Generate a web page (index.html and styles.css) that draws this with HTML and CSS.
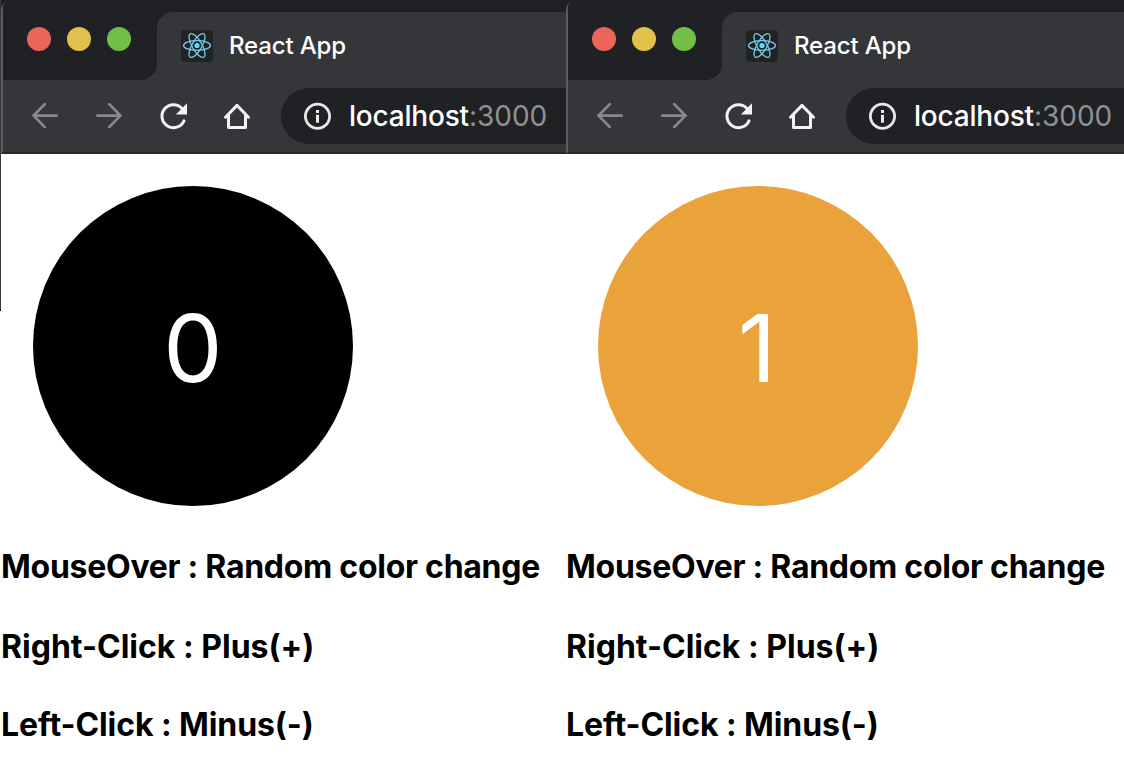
FILE: index.html
```html
<!DOCTYPE html>
<html lang="en">
<head>
<meta charset="utf-8">
<title>React App</title>
<link rel="stylesheet" href="styles.css">
</head>
<body>
<svg class="symbols" width="0" height="0" aria-hidden="true">
  <symbol id="react" viewBox="0 0 32 32">
    <rect width="32" height="32" rx="4" fill="#222"/>
    <g fill="none" stroke="#6fd0ee" stroke-width="1.3">
      <ellipse cx="16" cy="15.5" rx="13.5" ry="4.9"/>
      <ellipse cx="16" cy="15.5" rx="13.5" ry="4.9" transform="rotate(60 16 15.5)"/>
      <ellipse cx="16" cy="15.5" rx="13.5" ry="4.9" transform="rotate(120 16 15.5)"/>
    </g>
    <circle cx="16" cy="15.5" r="2.6" fill="#61dafb"/>
  </symbol>
  <symbol id="back" viewBox="0 0 32 32">
    <path d="M27.7 15.6H5.3M15.8 4.1L4.6 15.6L15.8 27.1" fill="none" stroke="#89898b" stroke-width="2.7" stroke-linecap="round"/>
  </symbol>
  <symbol id="forward" viewBox="0 0 32 32">
    <path d="M4.3 15.6H26.7M16.2 4.1L27.4 15.6L16.2 27.1" fill="none" stroke="#89898b" stroke-width="2.7" stroke-linecap="round"/>
  </symbol>
  <symbol id="reload" viewBox="0 0 32 32">
    <path d="M27 20.8A11.5 11.5 0 1 1 25 8.4" fill="none" stroke="#f1f3f4" stroke-width="3" stroke-linecap="round"/>
    <path d="M30 3.3V14.5H18.8Z" fill="#f1f3f4"/>
  </symbol>
  <symbol id="home" viewBox="0 0 32 32">
    <path d="M4.5 17.2L16 5.4L27.5 17.2M7.5 15V27.4H24.5V15" fill="none" stroke="#f1f3f4" stroke-width="3" stroke-linecap="round" stroke-linejoin="round"/>
  </symbol>
  <symbol id="info" viewBox="0 0 28 28">
    <circle cx="14.5" cy="14.3" r="12.1" fill="none" stroke="#e8e8e9" stroke-width="2.8"/>
    <path d="M14.5 8V10.9M14.5 12.8V20.8" stroke="#e8e8e9" stroke-width="3"/>
  </symbol>
</svg>
<div class="desktop">
  <div class="edge"></div>
  <section class="window">
    <header class="chrome">
      <div class="titlebar">
        <div class="lights"><i class="light close"></i><i class="light minimize"></i><i class="light zoom"></i></div>
        <div class="tab"><svg class="favicon"><use href="#react"/></svg><span class="tab-title">React App</span></div>
      </div>
      <div class="toolbar">
        <svg class="icon"><use href="#back"/></svg>
        <svg class="icon"><use href="#forward"/></svg>
        <svg class="icon"><use href="#reload"/></svg>
        <svg class="icon"><use href="#home"/></svg>
        <div class="address"><svg class="info"><use href="#info"/></svg><span class="url">localhost<span class="port">:3000</span></span></div>
      </div>
    </header>
    <main class="page">
      <div class="counter black"><span class="digit">0</span></div>
      <h3 class="hint over">MouseOver : Random color change</h3>
      <h3 class="hint plus">Right-Click : Plus(+)</h3>
      <h3 class="hint minus">Left-Click : Minus(-)</h3>
    </main>
  </section>
  <section class="window">
    <header class="chrome">
      <div class="titlebar">
        <div class="lights"><i class="light close"></i><i class="light minimize"></i><i class="light zoom"></i></div>
        <div class="tab"><svg class="favicon"><use href="#react"/></svg><span class="tab-title">React App</span></div>
      </div>
      <div class="toolbar">
        <svg class="icon"><use href="#back"/></svg>
        <svg class="icon"><use href="#forward"/></svg>
        <svg class="icon"><use href="#reload"/></svg>
        <svg class="icon"><use href="#home"/></svg>
        <div class="address"><svg class="info"><use href="#info"/></svg><span class="url">localhost<span class="port">:3000</span></span></div>
      </div>
    </header>
    <main class="page">
      <div class="counter orange"><span class="digit">1</span></div>
      <h3 class="hint over">MouseOver : Random color change</h3>
      <h3 class="hint plus">Right-Click : Plus(+)</h3>
      <h3 class="hint minus">Left-Click : Minus(-)</h3>
    </main>
  </section>
</div>
</body>
</html>
```

FILE: styles.css
```css
* { box-sizing: border-box; }
body { margin: 0; background: #fff; font-family: Inter, "Liberation Sans", sans-serif; overflow: hidden; }
.symbols { display: block; }
.desktop { display: flex; width: 1124px; height: 766px; overflow: hidden; background: linear-gradient(#202124 20px, #fff 20px); }
.edge { flex: none; width: 1px; height: 311px; background: #38383a; border-bottom: 1px solid #000; }
.window { flex: none; width: 565px; overflow: hidden; }
.chrome { height: 154px; background: #35363a; border-left: 2px solid #5c5d60; border-bottom: 2px solid #28282a; border-top-left-radius: 10px; }
.titlebar { display: flex; height: 80px; background: linear-gradient(#202124 40px, #35363a 40px); border-top-left-radius: 8px; }
.lights { display: flex; gap: 16px; width: 154px; height: 80px; padding: 27px 0 0 24px; background: #202124; border-radius: 8px 0 16px 0; }
.light { width: 24px; height: 24px; border-radius: 50%; }
.close { background: #ed655a; }
.minimize { background: #e1c04c; }
.zoom { background: #72be47; }
.tab { display: flex; flex: 1; height: 68px; margin-top: 12px; padding: 18px 0 0 24px; background: #35363a; border-top-left-radius: 16px; }
.favicon { width: 32px; height: 32px; }
.tab-title { margin-left: 16px; color: #fff; font-size: 24px; font-weight: 500; line-height: 32px; letter-spacing: -0.15px; white-space: nowrap; }
.toolbar { display: flex; height: 72px; padding: 20px 0 0 26px; }
.icon { flex: none; width: 32px; height: 32px; margin-right: 32px; }
.address { display: flex; flex: 1; height: 56px; margin: -12px 0 0 -4px; padding: 14px 0 0 22px; background: #202124; border-radius: 28px 0 0 28px; }
.info { flex: none; width: 28px; height: 28px; }
.url { margin-left: 18px; color: #fff; font-size: 28px; font-weight: 500; line-height: 29px; letter-spacing: -0.2px; font-feature-settings: "calt" 0; white-space: nowrap; }
.port { color: #909193; font-weight: 400; letter-spacing: 0; }
.page { height: 612px; padding-top: 32px; background: #fff; }
.counter { display: flex; align-items: center; justify-content: center; width: 320px; height: 320px; padding-top: 4px; margin-left: 32px; border-radius: 50%; color: #fff; }
.black { background: #000; }
.orange { padding-right: 2px; background: #eaa23a; }
.digit { font-size: 94px; line-height: 100px; }
.hint { margin: 0; color: #000; font-size: 32px; font-weight: 700; line-height: 40px; font-feature-settings: "calt" 0; white-space: nowrap; }
.over { margin-top: 41px; letter-spacing: -0.27px; }
.plus { margin-top: 40px; letter-spacing: 0; }
.minus { margin-top: 38px; letter-spacing: -0.08px; }
```
